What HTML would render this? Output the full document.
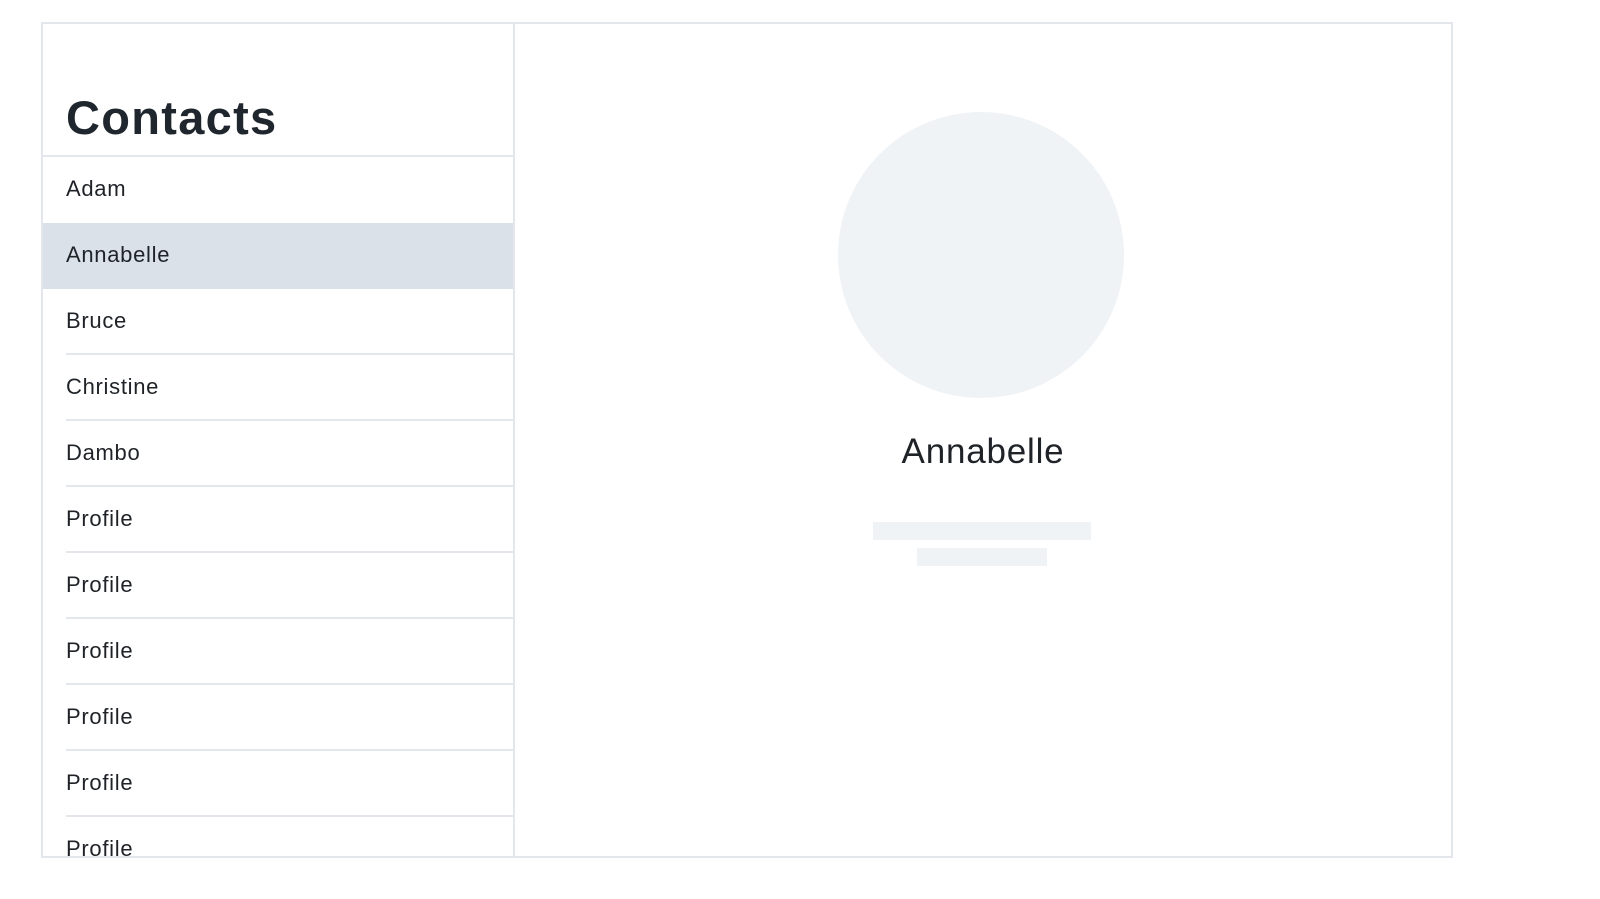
<!DOCTYPE html>
<html><head><meta charset="utf-8"><style>
*{box-sizing:border-box;margin:0;padding:0}
html,body{width:1600px;height:899px;background:#fff;overflow:hidden;font-family:"Liberation Sans",sans-serif;color:#1f2328}
.wrap{position:absolute;left:41px;top:22px;width:1412px;height:836px;border:2px solid #e3e7ec;overflow:hidden}
.side{position:absolute;left:0;top:0;width:472px;height:100%;border-right:2px solid #e3e7ec;overflow:hidden}
h1{position:absolute;left:23px;top:66px;font-size:47px;font-weight:700;letter-spacing:1.3px;color:#1f262d}
.list{position:absolute;left:0;top:131px;width:470px;border-top:2px solid #e3e7ec}
.row{height:66px;position:relative;padding-left:23px;font-size:22px;line-height:64px;letter-spacing:0.7px}
.row:after{content:"";position:absolute;left:23px;right:0;bottom:0;height:2px;background:#e3e7ec}
.row.sel{background:#dbe1e8}
.row.sel:after,.row.pre:after{display:none}
.main{position:absolute;left:472px;top:0;right:0;height:100%}
.av{position:absolute;left:323px;top:88px;width:286px;height:286px;border-radius:50%;background:#f0f3f6}
.name{position:absolute;left:0;width:936px;top:408px;text-align:center;font-size:35px;letter-spacing:0.8px}
.b1{position:absolute;left:358px;top:498px;width:218px;height:18px;background:#f0f3f6}
.b2{position:absolute;left:402px;top:524px;width:130px;height:18px;background:#f0f3f6}
</style></head><body>
<div class="wrap">
<div class="side">
<h1>Contacts</h1>
<div class="list">
<div class="row pre">Adam</div>
<div class="row sel">Annabelle</div>
<div class="row">Bruce</div>
<div class="row">Christine</div>
<div class="row">Dambo</div>
<div class="row">Profile</div>
<div class="row">Profile</div>
<div class="row">Profile</div>
<div class="row">Profile</div>
<div class="row">Profile</div>
<div class="row">Profile</div>
</div>
</div>
<div class="main">
<div class="av"></div>
<div class="name">Annabelle</div>
<div class="b1"></div>
<div class="b2"></div>
</div>
</div>
</body></html>
